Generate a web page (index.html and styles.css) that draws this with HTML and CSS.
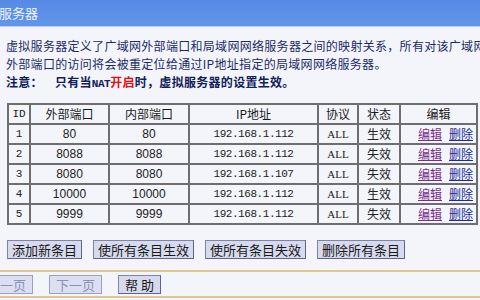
FILE: index.html
```html
<!DOCTYPE html>
<html lang="zh-CN">
<head>
    <meta charset="UTF-8">
    <title>虚拟服务器</title>
    <link rel="stylesheet" href="styles.css">
</head>
<body>
    <div class="title"><span>虚拟服务器</span></div>

    <div class="content">
        <p class="desc">虚拟服务器定义了广域网外部端口和局域网网络服务器之间的映射关系，所有对该广域网<br>外部端口的访问将会被重定位给通过IP地址指定的局域网网络服务器。</p>
        <p class="note">注意：<span class="gap"></span>只有当<span class="nat">NAT</span><span class="red">开启</span>时，虚拟服务器的设置生效。</p>

        <table class="list">
            <tr>
                <th class="c-id mono">ID</th>
                <th class="c-port">外部端口</th>
                <th class="c-port2">内部端口</th>
                <th class="c-ip">IP地址</th>
                <th class="c-proto">协议</th>
                <th class="c-state">状态</th>
                <th class="c-edit">编辑</th>
            </tr>
            <tr>
                <td class="mono">1</td><td class="num">80</td><td class="num">80</td>
                <td class="ip">192.168.1.112</td><td class="proto">ALL</td><td>生效</td>
                <td class="ops"><a class="edit" href="#">编辑</a><a class="del" href="#">删除</a></td>
            </tr>
            <tr>
                <td class="mono">2</td><td class="num">8088</td><td class="num">8088</td>
                <td class="ip">192.168.1.112</td><td class="proto">ALL</td><td>失效</td>
                <td class="ops"><a class="edit" href="#">编辑</a><a class="del" href="#">删除</a></td>
            </tr>
            <tr>
                <td class="mono">3</td><td class="num">8080</td><td class="num">8080</td>
                <td class="ip">192.168.1.107</td><td class="proto">ALL</td><td>失效</td>
                <td class="ops"><a class="edit" href="#">编辑</a><a class="del" href="#">删除</a></td>
            </tr>
            <tr>
                <td class="mono">4</td><td class="num">10000</td><td class="num">10000</td>
                <td class="ip">192.168.1.112</td><td class="proto">ALL</td><td>生效</td>
                <td class="ops"><a class="edit" href="#">编辑</a><a class="del" href="#">删除</a></td>
            </tr>
            <tr>
                <td class="mono">5</td><td class="num">9999</td><td class="num">9999</td>
                <td class="ip">192.168.1.112</td><td class="proto">ALL</td><td>失效</td>
                <td class="ops"><a class="edit" href="#">编辑</a><a class="del" href="#">删除</a></td>
            </tr>
        </table>

        <div class="actions">
            <button>添加新条目</button>
            <button>使所有条目生效</button>
            <button>使所有条目失效</button>
            <button>删除所有条目</button>
        </div>
    </div>

    <div class="pager">
        <button class="prev" disabled>上一页</button>
        <button disabled>下一页</button>
        <button>帮 助</button>
    </div>
</body>
</html>
```

FILE: styles.css
```css
body {
    margin: 0;
    background-color: #f3f5fa;
    color: #1e1e1e;
    font-family: "Noto Sans CJK SC", sans-serif;
    font-size: 12px;
    overflow: hidden;
    white-space: nowrap;
}
.title {
    height: 26px;
    line-height: 26px;
    background: linear-gradient(#5589e4, #6396ea);
    border-bottom: 1px solid #b8cdf2;
    color: #eef3fd;
    font-size: 13px;
    overflow: hidden;
}
.title span {
    margin-left: -27px;
}
.content {
    padding: 10px 0 0 6px;
}
.desc, .note {
    margin: 0;
    line-height: 18px;
    letter-spacing: 0.3px;
    color: #1a2a6a;
}
.note {
    font-weight: bold;
    color: #10205a;
}
.gap {
    display: inline-block;
    width: 12px;
}
.nat {
    font-family: "Liberation Mono", monospace;
    font-size: 11px;
    letter-spacing: -0.5px;
}
.red {
    color: #e01010;
}
table.list {
    margin-top: 10px;
    margin-left: 1px;
    width: 471px;
    border-collapse: collapse;
    border: 2px solid #6a6a6a;
    table-layout: fixed;
}
.list th, .list td {
    border: 2px solid #6e6e6e;
    height: 18px;
    padding: 0;
    text-align: center;
    font-weight: normal;
    color: #222;
    line-height: 18px;
}
.list th {
    color: #1a1a1a;
}
.c-id { width: 20px; }
.c-port { width: 77px; }
.c-port2 { width: 78px; }
.c-ip { width: 127px; }
.c-proto { width: 38px; }
.c-state { width: 40px; }
.mono {
    font-family: "Liberation Mono", monospace;
    font-size: 11px;
    color: #333;
}
.num {
    font-family: "Liberation Sans", sans-serif;
    font-size: 12px;
}
.ip {
    font-family: "Liberation Mono", monospace;
    font-size: 11px;
    letter-spacing: -0.45px;
}
.proto {
    font-family: "Liberation Serif", serif;
    font-size: 11px;
}
.list td.ops {
    text-align: left;
    padding-left: 17px;
}
.edit, .del {
    text-decoration: underline;
}
.edit {
    color: #7a2c8c;
    margin-right: 7px;
}
.del {
    color: #1c2a9c;
}
.actions {
    display: flex;
    gap: 11px;
    margin: 15px 0 11px 1px;
}
button {
    height: 19px;
    padding: 0 4px;
    border: 1px solid #7d84ab;
    border-right-color: #5d6490;
    border-bottom-color: #5d6490;
    background-color: #d7daee;
    color: #1a1a1a;
    font-family: "Noto Sans CJK SC", sans-serif;
    font-size: 13px;
    line-height: 16px;
}
button:disabled {
    color: #8a92b8;
    border-color: #9aa1c6;
    background-color: #dcdff1;
}
.pager {
    display: flex;
    gap: 16px;
    border-top: 2px solid #e2c78f;
    border-bottom: 2px solid #e2c78f;
    padding: 3px 0 2px;
}
.pager .prev {
    margin-left: -20px;
}
.pager button {
    padding: 0 6px;
}
```
